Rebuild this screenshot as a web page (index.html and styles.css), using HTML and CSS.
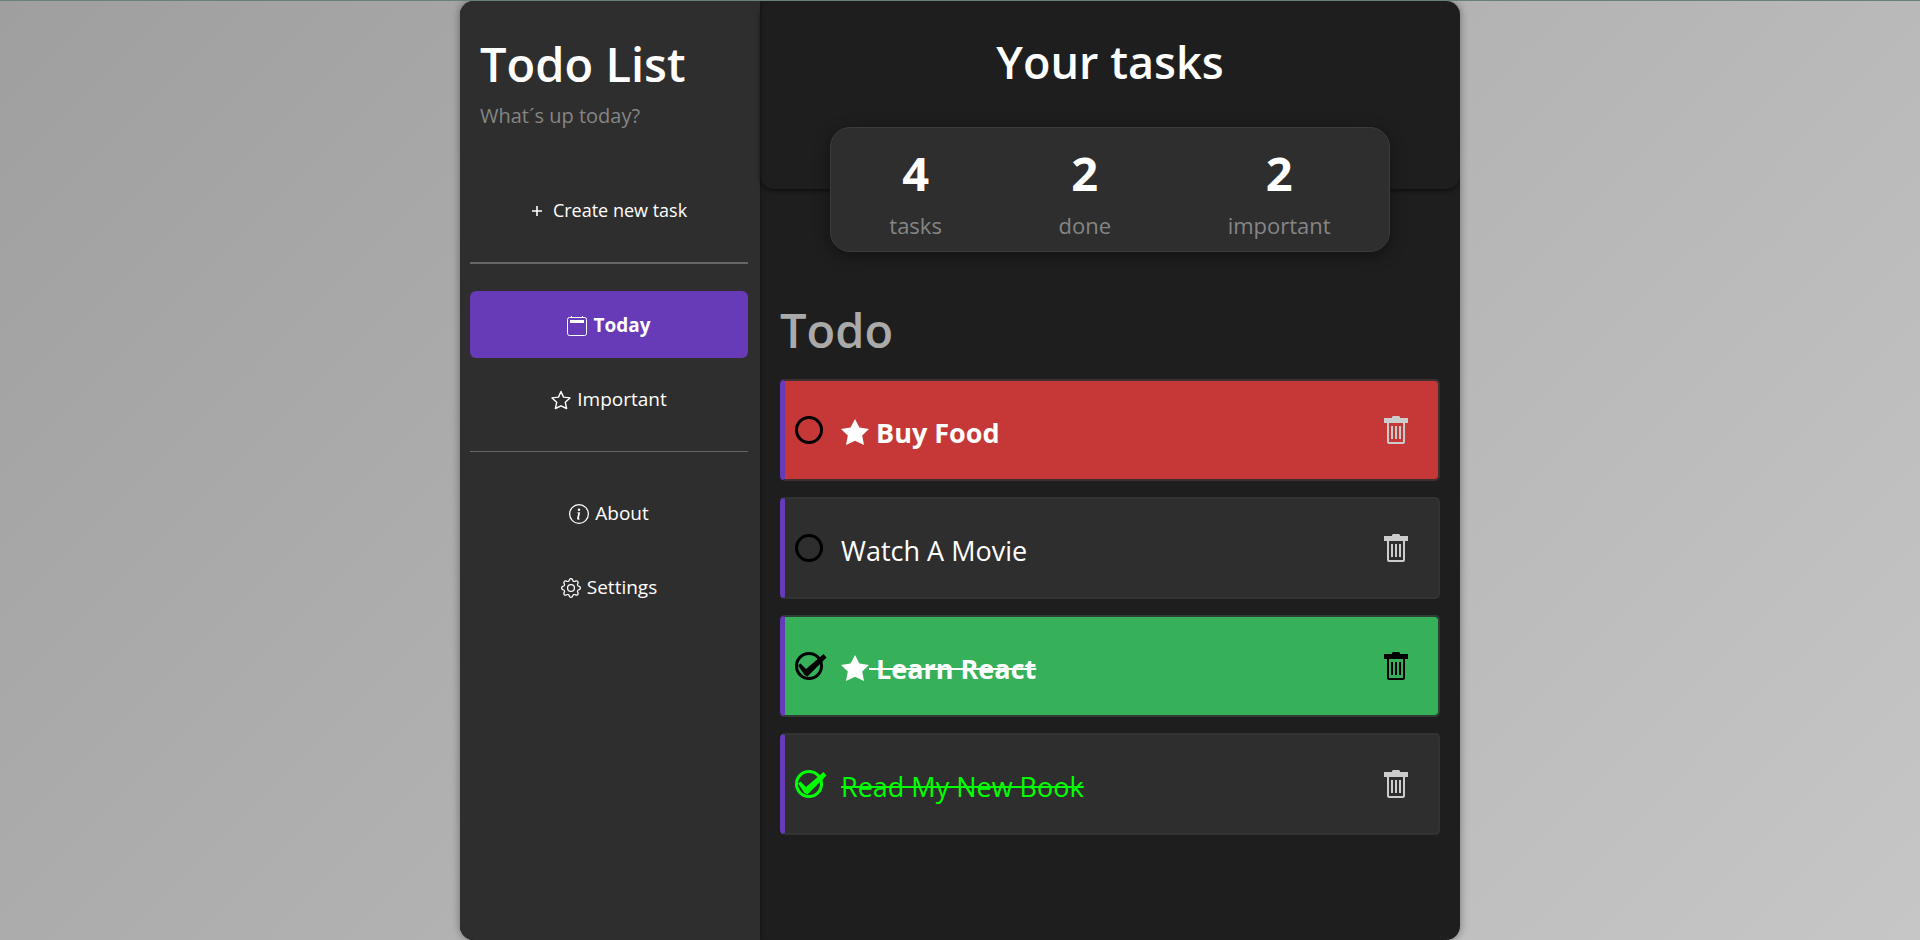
FILE: index.html
```
<!DOCTYPE html>
<html lang="en">
<head>
<meta charset="utf-8">
<meta name="viewport" content="width=device-width, initial-scale=1">
<title>Todo List</title>
<link rel="stylesheet" href="styles.css">
</head>
<body>
<svg class="sprite" aria-hidden="true">
  <symbol id="trash" viewBox="0 0 24 28">
    <path fill="currentColor" d="M8 2V1l1-1h6l1 1v1h8v5H0V2z"/>
    <path fill="none" stroke="currentColor" stroke-width="2" d="M4 7v19q0 1 1 1h14q1 0 1-1V7M8 10v13M12 10v13M16 10v13"/>
  </symbol>
  <symbol id="circle" viewBox="0 0 32 28">
    <circle cx="14" cy="14" r="12.5" fill="none" stroke="currentColor" stroke-width="3"/>
  </symbol>
  <symbol id="circle-check" viewBox="0 0 32 28">
    <circle cx="14" cy="14" r="12.5" fill="none" stroke="currentColor" stroke-width="3"/>
    <path fill="currentColor" d="M3 13.500L5.500 11.500L11 17L28.500 2L31.500 5.500L12.500 24.500L9.500 23Z"/>
  </symbol>
  <symbol id="star-fill" viewBox="0 0 28 26">
    <path fill="currentColor" d="M14 0l4.400 8.600L28 10l-6.800 6.600L23 26l-9-4.200L5 26l1.800-9.400L0 10l9.600-1.400z"/>
  </symbol>
</svg>
<div class="app">
  <aside class="sidebar">
    <header class="brand">
      <h1 class="brand-title">Todo List</h1>
      <p class="brand-tagline">What´s up today?</p>
    </header>
    <nav class="menu">
      <button type="button" class="menu-item menu-create">
        <svg class="plus-icon" viewBox="0 0 12 12" aria-hidden="true"><path d="M6 1v10M1 6h10" fill="none" stroke="currentColor" stroke-width="1.600"/></svg>
        Create new task
      </button>
      <hr class="divider divider-strong">
      <button type="button" class="menu-item menu-active">
        <svg class="menu-icon" viewBox="0 0 20 20" aria-hidden="true"><rect x=".5" y="1.500" width="19" height="18" rx="2" fill="none" stroke="currentColor"/><path d="M3 4h14v3H3zM4 0h1v2H4zM15 0h1v2h-1z" fill="currentColor"/></svg>
        Today
      </button>
      <button type="button" class="menu-item">
        <svg class="menu-icon" viewBox="0 0 20 20" aria-hidden="true"><path d="M10 1.500l2.500 5.600 6.500.8-4.700 4.400 1.300 6.200L10 15.800l-5.600 2.700 1.300-6.200L1 7.900l6.500-.8z" fill="none" stroke="currentColor" stroke-width="1.400" stroke-linejoin="round"/></svg>
        Important
      </button>
      <hr class="divider">
      <button type="button" class="menu-item">
        <svg class="menu-icon" viewBox="0 0 16 16" fill="currentColor" aria-hidden="true"><path d="M8 15A7 7 0 1 1 8 1a7 7 0 0 1 0 14m0 1A8 8 0 1 0 8 0a8 8 0 0 0 0 16"/><path d="m8.930 6.588-2.290.287-.082.380.450.083c.294.070.352.176.288.469l-.738 3.468c-.194.897.105 1.319.808 1.319.545 0 1.178-.252 1.465-.598l.088-.416c-.2.176-.492.246-.686.246-.275 0-.375-.193-.304-.533zM9 4.500a1 1 0 1 1-2 0 1 1 0 0 1 2 0"/></svg>
        About
      </button>
      <button type="button" class="menu-item">
        <svg class="menu-icon" viewBox="0 0 16 16" fill="currentColor" aria-hidden="true"><path d="M8 4.754a3.246 3.246 0 1 0 0 6.492 3.246 3.246 0 0 0 0-6.492M5.754 8a2.246 2.246 0 1 1 4.492 0 2.246 2.246 0 0 1-4.492 0"/><path d="M9.796 1.343c-.527-1.790-3.065-1.790-3.592 0l-.094.319a.873.873 0 0 1-1.255.520l-.292-.160c-1.640-.892-3.433.902-2.540 2.541l.159.292a.873.873 0 0 1-.520 1.255l-.319.094c-1.790.527-1.790 3.065 0 3.592l.319.094a.873.873 0 0 1 .520 1.255l-.160.292c-.892 1.640.901 3.434 2.541 2.540l.292-.159a.873.873 0 0 1 1.255.520l.094.319c.527 1.790 3.065 1.790 3.592 0l.094-.319a.873.873 0 0 1 1.255-.520l.292.160c1.640.893 3.434-.902 2.540-2.541l-.159-.292a.873.873 0 0 1 .520-1.255l.319-.094c1.790-.527 1.790-3.065 0-3.592l-.319-.094a.873.873 0 0 1-.520-1.255l.160-.292c.893-1.640-.902-3.433-2.541-2.540l-.292.159a.873.873 0 0 1-1.255-.520zm-2.633.283c.246-.835 1.428-.835 1.674 0l.094.319a1.873 1.873 0 0 0 2.693 1.115l.291-.160c.764-.415 1.600.420 1.184 1.185l-.159.292a1.873 1.873 0 0 0 1.116 2.692l.318.094c.835.246.835 1.428 0 1.674l-.319.094a1.873 1.873 0 0 0-1.115 2.693l.160.291c.415.764-.420 1.600-1.185 1.184l-.291-.159a1.873 1.873 0 0 0-2.693 1.116l-.094.318c-.246.835-1.428.835-1.674 0l-.094-.319a1.873 1.873 0 0 0-2.692-1.115l-.292.160c-.764.415-1.600-.420-1.184-1.185l.159-.291A1.873 1.873 0 0 0 1.945 8.930l-.319-.094c-.835-.246-.835-1.428 0-1.674l.319-.094A1.873 1.873 0 0 0 3.060 4.377l-.160-.292c-.415-.764.420-1.600 1.185-1.184l.292.159a1.873 1.873 0 0 0 2.692-1.115z"/></svg>
        Settings
      </button>
    </nav>
  </aside>
  <main class="content">
    <header class="hero">
      <h2 class="hero-title">Your tasks</h2>
    </header>
    <dl class="stats">
      <div class="stat"><dt class="stat-label">tasks</dt><dd class="stat-value">4</dd></div>
      <div class="stat"><dt class="stat-label">done</dt><dd class="stat-value">2</dd></div>
      <div class="stat"><dt class="stat-label">important</dt><dd class="stat-value">2</dd></div>
    </dl>
    <section class="todo">
      <h2 class="todo-title">Todo</h2>
      <ul class="task-list">
        <li class="task task-important">
          <label class="task-label">
            <input type="checkbox" class="task-input">
            <svg class="task-check" aria-hidden="true"><use href="#circle"/></svg>
            <span class="task-name"><svg class="task-star" aria-hidden="true"><use href="#star-fill"/></svg> Buy Food</span>
          </label>
          <button type="button" class="task-delete" aria-label="Delete Buy Food"><svg class="trash-icon" aria-hidden="true"><use href="#trash"/></svg></button>
        </li>
        <li class="task">
          <label class="task-label">
            <input type="checkbox" class="task-input">
            <svg class="task-check" aria-hidden="true"><use href="#circle"/></svg>
            <span class="task-name">Watch A Movie</span>
          </label>
          <button type="button" class="task-delete" aria-label="Delete Watch A Movie"><svg class="trash-icon" aria-hidden="true"><use href="#trash"/></svg></button>
        </li>
        <li class="task task-important task-done">
          <label class="task-label">
            <input type="checkbox" class="task-input" checked>
            <svg class="task-check" aria-hidden="true"><use href="#circle-check"/></svg>
            <span class="task-name"><svg class="task-star" aria-hidden="true"><use href="#star-fill"/></svg> Learn React</span>
          </label>
          <button type="button" class="task-delete" aria-label="Delete Learn React"><svg class="trash-icon" aria-hidden="true"><use href="#trash"/></svg></button>
        </li>
        <li class="task task-done">
          <label class="task-label">
            <input type="checkbox" class="task-input" checked>
            <svg class="task-check" aria-hidden="true"><use href="#circle-check"/></svg>
            <span class="task-name">Read My New Book</span>
          </label>
          <button type="button" class="task-delete" aria-label="Delete Read My New Book"><svg class="trash-icon" aria-hidden="true"><use href="#trash"/></svg></button>
        </li>
      </ul>
    </section>
  </main>
</div>
</body>
</html>
```
FILE: styles.css
```
* {
  box-sizing: border-box;
}

body {
  margin: 0;
  min-height: 100vh;
  border-top: 1px solid #688278;
  background: linear-gradient(135deg, #9f9f9f, #c6c6c6);
  color: #fff;
  font-family: "Open Sans", "Noto Sans", sans-serif;
  display: flex;
  justify-content: center;
}

h1,
h2,
p,
dl,
dd,
ul {
  margin: 0;
  padding: 0;
}

button {
  border: 0;
  background: none;
  color: inherit;
  font: inherit;
  cursor: pointer;
}

.sprite {
  display: none;
}

.app {
  display: grid;
  grid-template-columns: 3fr 7fr;
  width: 100%;
  max-width: 1000px;
  border-radius: 14px;
  overflow: hidden;
  background: #1e1e1e;
  box-shadow: 0 0 8px rgba(0, 0, 0, 0.4);
}

.sidebar {
  padding: 29px 12px 28px 10px;
  background: #2e2e2e;
  box-shadow: 0 0 4px rgba(0, 0, 0, 0.5);
}

.brand {
  padding-left: 10px;
}

.brand-title {
  font-size: 47px;
  line-height: 68px;
  font-weight: 600;
}

.brand-tagline {
  color: #858585;
  font-size: 20px;
  line-height: 36px;
}

.menu {
  display: flex;
  flex-direction: column;
  gap: 7px;
  padding-top: 42px;
}

.menu-item {
  display: flex;
  align-items: center;
  justify-content: center;
  gap: 6px;
  padding: 21px 20px 19px;
  border-radius: 6px;
  font-size: 19px;
  line-height: 27px;
}

.menu-create {
  gap: 10px;
  font-size: 18px;
}

.menu-active {
  background: #673ab7;
  font-weight: 700;
}

.menu-icon {
  width: 20px;
  height: 20px;
}

.plus-icon {
  width: 12px;
  height: 12px;
}

.divider {
  width: 100%;
  margin: 12px 0 20px;
  border: 0;
  border-top: 1px solid #666;
}

.divider-strong {
  border-top-width: 2px;
}

.content {
  display: flex;
  flex-direction: column;
}

.hero {
  padding: 27px 20px 94px;
  border-radius: 14px;
  box-shadow: 0 2px 4px rgba(0, 0, 0, 0.5);
  text-align: center;
}

.hero-title {
  font-size: 45px;
  line-height: 67px;
  font-weight: 600;
}

.stats {
  display: flex;
  justify-content: space-around;
  width: 80%;
  margin: -62px auto 0;
  padding: 12px 0 8px;
  border: 1px solid #3c3c3c;
  border-radius: 20px;
  background: #2e2e2e;
  box-shadow: 0 4px 16px rgba(0, 0, 0, 0.4);
}

.stat {
  display: flex;
  flex-direction: column-reverse;
  text-align: center;
}

.stat-value {
  font-size: 47px;
  line-height: 67px;
  font-weight: 700;
}

.stat-label {
  color: #858585;
  font-size: 22px;
  line-height: 36px;
}

.todo {
  padding: 44px 20px 40px;
}

.todo-title {
  color: #aaa;
  font-size: 47px;
  line-height: 68px;
  font-weight: 600;
}

.task-list {
  display: flex;
  flex-direction: column;
  gap: 16px;
  padding-top: 15px;
  list-style: none;
}

.task {
  display: flex;
  align-items: center;
  padding: 0 26px 0 10px;
  border: 2px solid #333;
  border-left: 5px solid #673ab7;
  border-radius: 5px;
  background: #2e2e2e;
}

.task-important {
  border-color: #3d3030;
  border-left-color: #673ab7;
  background: #c63838;
  background-clip: padding-box;
  font-weight: 700;
}

.task-important.task-done {
  border-color: #303d33;
  border-left-color: #673ab7;
  background-color: #37b05a;
}

.task-label {
  flex: 1;
  display: flex;
  align-items: center;
  gap: 14px;
  padding: 29px 0;
  font-size: 27px;
  line-height: 34px;
  cursor: pointer;
}

.task-input {
  position: absolute;
  margin: 0;
  width: 28px;
  height: 28px;
  opacity: 0;
}

.task-check {
  width: 32px;
  height: 28px;
  color: #000;
}

.task-name {
  padding-top: 6px;
}

.task-star {
  width: 28px;
  height: 26px;
  vertical-align: -2px;
}

.task-done .task-name {
  text-decoration: line-through 2px;
}

.task-done:not(.task-important) .task-name,
.task-done:not(.task-important) .task-check {
  color: #0f0;
}

.task-delete {
  display: flex;
  padding: 4px;
  color: #ccc;
}

.task-important.task-done .task-delete {
  color: #000;
}

.trash-icon {
  width: 24px;
  height: 28px;
}
```
